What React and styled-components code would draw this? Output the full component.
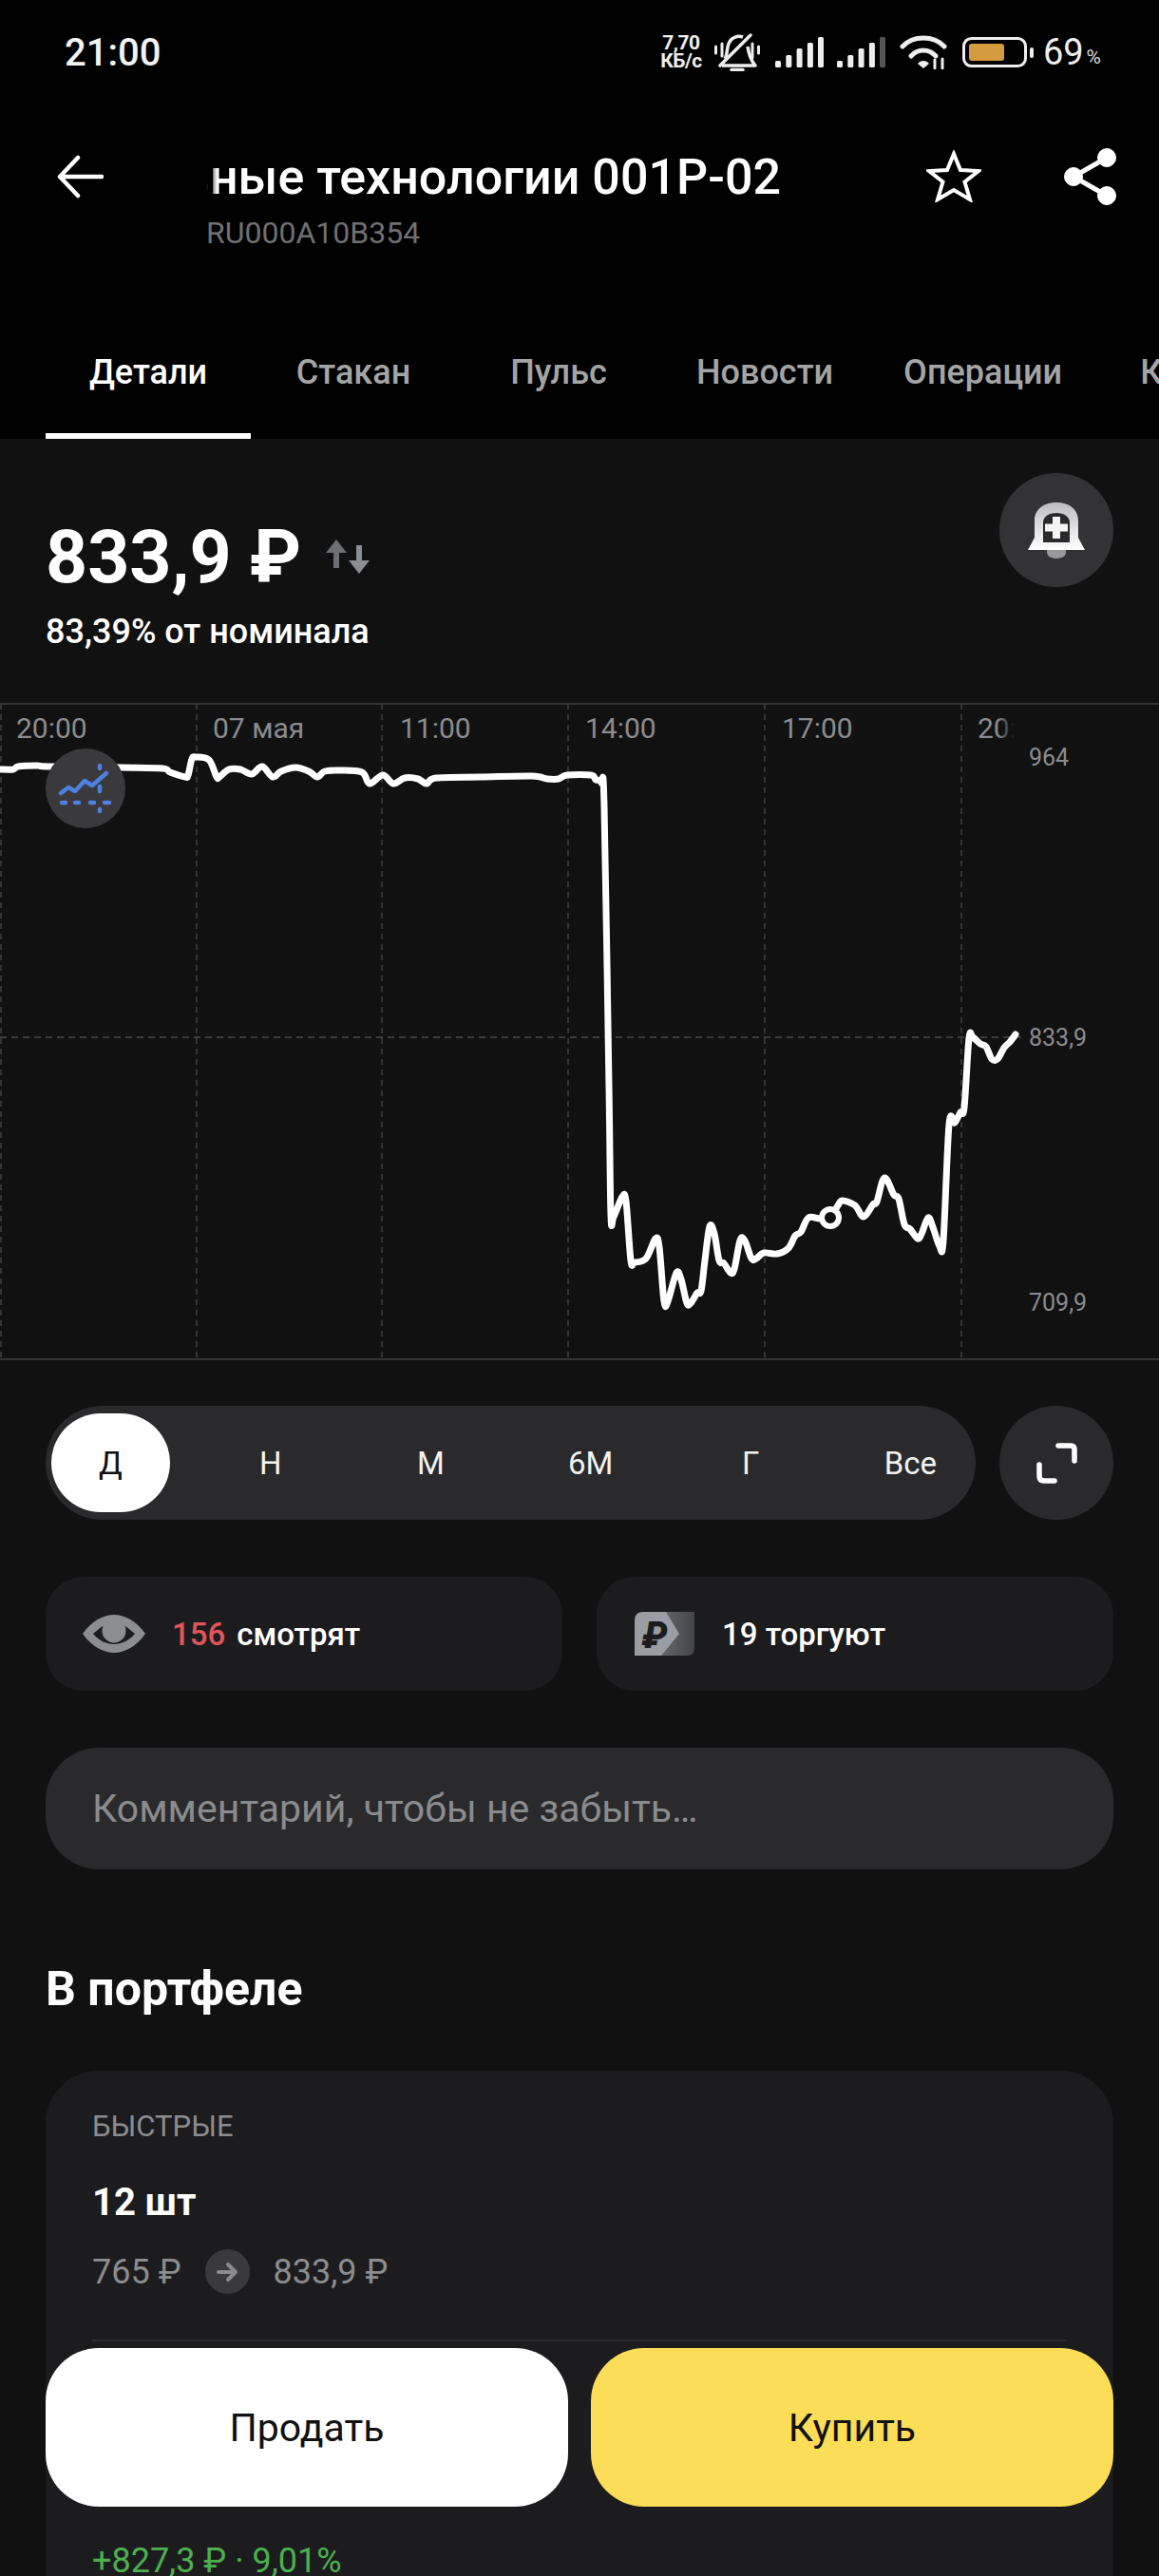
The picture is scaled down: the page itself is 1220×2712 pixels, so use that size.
import React from 'react';
import styled, { createGlobalStyle } from 'styled-components';

const GlobalStyle = createGlobalStyle`
    html, body {
        margin: 0;
        padding: 0;
        background: #111112;
    }

    body {
        font-family: Roboto, "Noto Sans", sans-serif;
    }
`;

const Page = styled.div`
    position: relative;
    width: 1220px;
    height: 2712px;
    overflow: hidden;
    background: #111112;
    color: #fff;
`;

const Header = styled.header`
    height: 462px;
    background: #000;
`;

const StatusBar = styled.div`
    display: flex;
    align-items: center;
    justify-content: space-between;
    height: 110px;
    padding: 0 61px 0 68px;
    box-sizing: border-box;
`;

const Clock = styled.span`
    font-size: 40px;
    font-weight: 500;
    color: #f2f2f2;
`;

const StatusIcons = styled.div`
    display: flex;
    align-items: center;
`;

const NetSpeed = styled.span`
    display: flex;
    flex-direction: column;
    align-items: center;
    width: 46px;
    margin-right: 12px;
    font-size: 21px;
    line-height: 19px;
    font-weight: 700;
    color: #eee;
    letter-spacing: -0.5px;
`;

const StatusSvg = styled.svg`
    display: block;
    margin-right: ${props => props.$gap || 0}px;
`;

const BatteryText = styled.span`
    font-size: 38px;
    line-height: 40px;
    font-weight: 400;
    color: #eee;
    margin-left: 10px;
`;

const BatteryPercent = styled.span`
    font-size: 21px;
    line-height: 20px;
    margin: 9px 0 0 3px;
    color: #ddd;
`;

const TopBar = styled.div`
    display: flex;
    align-items: flex-start;
    height: 230px;
    padding: 46px 45px 0 60px;
    box-sizing: border-box;
`;

const NavIcon = styled.svg`
    display: block;
    flex: none;
    margin-top: ${props => props.$top || 0}px;
    margin-right: ${props => props.$right || 0}px;
`;

const TitleBlock = styled.div`
    width: 605px;
    margin: 1px 153px 0 108px;
    flex: none;
`;

const TitleClip = styled.div`
    display: flex;
    justify-content: flex-end;
    overflow: hidden;
    white-space: nowrap;
    -webkit-mask-image: linear-gradient(90deg, transparent 0, #000 12px);
    mask-image: linear-gradient(90deg, transparent 0, #000 12px);
`;

const Title = styled.h1`
    margin: 0;
    flex: none;
    font-size: 52px;
    line-height: 60px;
    font-weight: 500;
    color: #fff;
`;

const Isin = styled.div`
    margin-top: 8px;
    font-size: 32px;
    line-height: 40px;
    font-weight: 400;
    color: #6f7072;
`;

const Tabs = styled.nav`
    display: flex;
    height: 122px;
    padding-left: 48px;
    overflow: hidden;
`;

const Tab = styled.div`
    flex: none;
    min-width: 216px;
    padding: 32px 37px 0;
    box-sizing: border-box;
    text-align: center;
    font-size: 36px;
    line-height: 40px;
    font-weight: 500;
    color: ${props => (props.$active ? '#fff' : '#a3a4a6')};
    border-bottom: 6px solid ${props => (props.$active ? '#fff' : 'transparent')};

    &:last-child {
        padding-left: 42px;
    }
`;

const PriceSection = styled.section`
    display: flex;
    justify-content: space-between;
    align-items: flex-start;
    height: 278px;
    padding: 0 48px;
    box-sizing: border-box;
`;

const PriceBlock = styled.div`
    padding-top: 82px;
`;

const PriceRow = styled.div`
    display: flex;
    align-items: center;
`;

const PriceValue = styled.div`
    font-size: 77px;
    line-height: 86px;
    font-weight: 700;
    white-space: nowrap;
`;

const SwapIcon = styled.svg`
    display: block;
    margin: 0 0 2px 25px;
`;

const PriceNote = styled.div`
    margin-top: 15px;
    font-size: 36px;
    line-height: 40px;
    font-weight: 500;
`;

const RoundButton = styled.button`
    display: flex;
    align-items: center;
    justify-content: center;
    flex: none;
    width: 120px;
    height: 120px;
    padding: 0;
    border: 0;
    border-radius: 50%;
    background: ${props => props.$bg || '#2a2a2c'};
    margin-top: ${props => props.$top || 0}px;
`;

const ChartBox = styled.section`
    position: relative;
    height: 692px;
`;

const ChartSvg = styled.svg`
    display: block;
`;

const ChartButton = styled.button`
    position: absolute;
    left: 48px;
    top: 48px;
    width: 84px;
    height: 84px;
    padding: 0;
    border: 0;
    border-radius: 50%;
    background: #3a3a3c;
`;

const Content = styled.div`
    padding: 48px 48px 0;
`;

const RangeRow = styled.div`
    display: flex;
    justify-content: space-between;
`;

const RangePicker = styled.div`
    display: flex;
    justify-content: space-between;
    width: 979px;
    height: 120px;
    padding: 8px 6px;
    box-sizing: border-box;
    border-radius: 60px;
    background: #2a2a2c;
`;

const RangeItem = styled.div`
    display: flex;
    align-items: center;
    justify-content: center;
    width: 125px;
    height: 104px;
    border-radius: 52px;
    font-size: 33px;
    font-weight: 400;
    background: ${props => (props.$active ? '#fff' : 'transparent')};
    color: ${props => (props.$active ? '#111' : '#f2f2f2')};
`;

const StatsRow = styled.div`
    display: grid;
    grid-template-columns: 544px 544px;
    justify-content: space-between;
    margin-top: 60px;
`;

const StatCard = styled.div`
    display: flex;
    align-items: center;
    height: 120px;
    padding-left: ${props => props.$pad}px;
    box-sizing: border-box;
    border-radius: 40px;
    background: #1c1c1e;
    font-size: 33px;
    font-weight: 500;
`;

const StatIcon = styled.svg`
    display: block;
    flex: none;
    margin-right: ${props => props.$gap}px;
`;

const Watchers = styled.span`
    color: #e0565b;
    margin-right: 12px;
`;

const CommentField = styled.div`
    display: flex;
    align-items: center;
    height: 128px;
    margin-top: 60px;
    padding-left: 49px;
    border-radius: 56px;
    background: #2a2a2c;
    color: #8a8b8e;
    font-size: 41px;
`;

const SectionTitle = styled.h2`
    margin: 98px 0 0;
    font-size: 50px;
    line-height: 56px;
    font-weight: 700;
`;

const PortfolioCard = styled.div`
    margin-top: 58px;
    height: 700px;
    padding: 41px 49px 0;
    box-sizing: border-box;
    border-radius: 56px;
    background: #1c1c1e;
`;

const CardLabel = styled.div`
    font-size: 31px;
    line-height: 36px;
    color: #8b8c8f;
`;

const Quantity = styled.div`
    margin-top: 40px;
    font-size: 40px;
    line-height: 44px;
    font-weight: 700;
`;

const PriceChange = styled.div`
    display: flex;
    align-items: center;
    height: 47px;
    margin-top: 27px;
    font-size: 36px;
    color: #8b8c8f;
`;

const ArrowBadge = styled.span`
    display: flex;
    align-items: center;
    justify-content: center;
    width: 47px;
    height: 47px;
    margin: 0 25px;
    border-radius: 50%;
    background: #3a3a3c;
`;

const Divider = styled.div`
    height: 2px;
    margin-top: 48px;
    background: #2c2c2e;
`;

const Profit = styled.div`
    margin-top: 211px;
    font-size: 36px;
    line-height: 40px;
    color: #4caf50;
`;

const ActionBar = styled.div`
    position: absolute;
    left: 48px;
    right: 48px;
    bottom: 73px;
    display: grid;
    grid-template-columns: 1fr 1fr;
    gap: 24px;
`;

const ActionButton = styled.button`
    height: 167px;
    border: 0;
    border-radius: 56px;
    font-family: inherit;
    font-size: 41px;
    font-weight: 400;
    color: #111;
    background: ${props => (props.$primary ? '#fcdd57' : '#fff')};
`;

// price points of the day, x and y are in page pixels
const PRICE_POINTS = [
    [0, 810], [14, 810], [19, 807], [39, 806], [52, 807], [128, 808], [171, 809], [179, 813], [195, 818],
    [198, 816], [202, 799], [206, 797], [220, 800], [228, 818], [231, 818], [241, 810], [253, 810], [265, 815],
    [276, 807], [287, 818], [296, 812], [311, 808], [325, 812], [334, 818], [342, 812], [358, 811], [381, 813],
    [389, 825], [403, 816], [414, 825], [426, 819], [440, 820], [449, 825], [459, 819], [506, 818], [560, 817],
    [576, 820], [588, 820], [597, 816], [622, 816], [627, 821], [633, 824], [636, 849], [641, 1143], [643, 1279],
    [646, 1281], [655, 1260], [659, 1265], [664, 1327], [668, 1329], [680, 1325], [690, 1304], [694, 1313],
    [699, 1370], [703, 1370], [712, 1340], [717, 1347], [723, 1372], [727, 1372], [734, 1361], [738, 1359],
    [742, 1327], [747, 1291], [752, 1299], [757, 1327], [762, 1330], [769, 1340], [773, 1336], [779, 1306],
    [784, 1306], [791, 1325], [796, 1325], [804, 1319], [818, 1320], [830, 1314], [837, 1301], [843, 1297],
    [851, 1282], [863, 1283], [874, 1282], [882, 1269], [887, 1264], [900, 1269], [909, 1281], [919, 1268],
    [923, 1265], [931, 1240], [941, 1258], [946, 1262], [952, 1289], [958, 1294], [966, 1304], [970, 1299],
    [977, 1282], [982, 1292], [989, 1312], [993, 1306], [999, 1184], [1005, 1182], [1011, 1171], [1015, 1166],
    [1020, 1093], [1024, 1092], [1032, 1099], [1038, 1102], [1044, 1115], [1050, 1115], [1057, 1103],
    [1063, 1097], [1069, 1089],
];

// cardinal spline through the points, so the peaks stay where they are
const smoothPath = points => {
    let d = `M${points[0][0]} ${points[0][1]}`;
    for (let i = 0; i < points.length - 1; i++) {
        const p0 = points[i - 1] || points[i];
        const p1 = points[i];
        const p2 = points[i + 1];
        const p3 = points[i + 2] || p2;
        const c1x = p1[0] + (p2[0] - p0[0]) / 6;
        const c1y = p1[1] + (p2[1] - p0[1]) / 6;
        const c2x = p2[0] - (p3[0] - p1[0]) / 6;
        const c2y = p2[1] - (p3[1] - p1[1]) / 6;
        d += ` C${c1x} ${c1y} ${c2x} ${c2y} ${p2[0]} ${p2[1]}`;
    }
    return d;
};

const GRID_X = [1, 207, 402, 598, 805, 1012];
const TIME_LABELS = [[17, '20:00'], [224, '07 мая'], [421, '11:00'], [616, '14:00'], [823, '17:00']];
const PRICE_LABELS = [[806, '964'], [1101, '833,9'], [1380, '709,9']];

const PriceChart = () => (
    <ChartSvg width="1220" height="692" viewBox="0 740 1220 692">
        <defs>
            <linearGradient id="labelFade" gradientUnits="userSpaceOnUse" x1="1050" x2="1068" y1="0" y2="0">
                <stop offset="0" stopColor="#8b8c8f" />
                <stop offset="1" stopColor="#8b8c8f" stopOpacity="0" />
            </linearGradient>
        </defs>
        <line x1="0" x2="1220" y1="741" y2="741" stroke="#333436" strokeWidth="2" />
        <line x1="0" x2="1220" y1="1431" y2="1431" stroke="#333436" strokeWidth="2" />
        {GRID_X.map(x => (
            <line key={x} x1={x} x2={x} y1="741" y2="1431" stroke="#333436" strokeWidth="2" strokeDasharray="6 5" />
        ))}
        <line x1="0" x2="1078" y1="1092" y2="1092" stroke="#3a3b3d" strokeWidth="2" strokeDasharray="7 5" />
        {TIME_LABELS.map(([x, label]) => (
            <text key={label} x={x} y="777" fontSize="30" fill="#8b8c8f" fontFamily="Roboto">{label}</text>
        ))}
        <text x="1029" y="777" fontSize="30" fill="url(#labelFade)" fontFamily="Roboto">20:00</text>
        {PRICE_LABELS.map(([y, label]) => (
            <text key={label} x="1083" y={y} fontSize="25" fill="#8b8c8f" fontFamily="Roboto">{label}</text>
        ))}
        <path
            d={smoothPath(PRICE_POINTS)}
            fill="none"
            stroke="#fff"
            strokeWidth="7"
            strokeLinecap="round"
            strokeLinejoin="round"
        />
        <circle cx="874" cy="1282" r="9" fill="#111112" stroke="#fff" strokeWidth="6" />
    </ChartSvg>
);

const SIGNAL_BARS = [[0, 7], [11.3, 13], [22.6, 20], [33.9, 26], [45, 32]];

const Signal = ({ dim, gap }) => (
    <StatusSvg $gap={gap} width="51" height="32" viewBox="0 0 51 32">
        {SIGNAL_BARS.map(([x, h], i) => (
            <rect
                key={x}
                x={x}
                y={32 - h}
                width="6"
                height={h}
                rx="1.5"
                fill={dim && i === 4 ? '#555' : '#eee'}
            />
        ))}
    </StatusSvg>
);

const App = () => (
    <Page>
        <GlobalStyle />
        <Header>
            <StatusBar>
                <Clock>21:00</Clock>
                <StatusIcons>
                    <NetSpeed>
                        <span>7,70</span>
                        <span>КБ/с</span>
                    </NetSpeed>
                    <StatusSvg $gap={16} width="48" height="40" viewBox="0 0 48 40" fill="none" stroke="#eee">
                        <path d="M11 27 C14 22 13 15 15 11 C17 5 24 2 30 4 M35 14 C36 21 38 28 43 34 H8" strokeWidth="3.5" strokeLinejoin="round" />
                        <path d="M18 38.5 H30" strokeWidth="3.5" strokeLinecap="round" />
                        <path d="M6 34 L38 2" strokeWidth="3.5" strokeLinecap="round" />
                        <path d="M1.5 14 V21 M8 11 V24 M40 11 V26 M46.5 14 V21" strokeWidth="3" strokeLinecap="round" />
                    </StatusSvg>
                    <Signal gap={14} />
                    <Signal dim gap={15} />
                    <StatusSvg $gap={16} width="50" height="36" viewBox="0 0 50 36" fill="none" stroke="#eee" strokeWidth="5" strokeLinecap="round">
                        <path d="M3 12 C14 0 36 0 47 12" />
                        <path d="M12 22 C19 14 31 14 38 22" />
                        <path d="M19 30 L25 35 L31 30 C28 26 22 26 19 30 Z" fill="#eee" stroke="none" />
                        <path d="M37 26 V35 M45 25 V35" strokeWidth="3" />
                    </StatusSvg>
                    <StatusSvg width="75" height="32" viewBox="0 0 75 32" fill="none">
                        <rect x="1.5" y="1.5" width="65" height="29" rx="8" stroke="#eee" strokeWidth="3" />
                        <rect x="7" y="7" width="37" height="18" rx="3" fill="#d49b3f" />
                        <rect x="71" y="11" width="4" height="11" rx="2" fill="#eee" />
                    </StatusSvg>
                    <BatteryText>69</BatteryText>
                    <BatteryPercent>%</BatteryPercent>
                </StatusIcons>
            </StatusBar>
            <TopBar>
                <NavIcon $top={7} width="49" height="46" viewBox="0 0 49 46" fill="none" stroke="#fff" strokeWidth="4.5" strokeLinecap="round" strokeLinejoin="round">
                    <path d="M47 23 H3 M22 3 L3 23 L22 43" />
                </NavIcon>
                <TitleBlock>
                    <TitleClip>
                        <Title>вные технологии 001P-02</Title>
                    </TitleClip>
                    <Isin>RU000A10B354</Isin>
                </TitleBlock>
                <NavIcon $top={2} $right={87} width="58" height="55" viewBox="0 0 58 55" fill="none" stroke="#fff" strokeWidth="4" strokeLinejoin="miter">
                    <path d="M29 4 L36 21 L55 22 L40.5 33.5 L46 52 L29 42 L12 52 L17.5 33.5 L3 22 L22 21 Z" />
                </NavIcon>
                <NavIcon width="55" height="60" viewBox="0 0 55 60" fill="#fff" stroke="#fff">
                    <path d="M45 10 L10 30 L45 50" fill="none" strokeWidth="5" />
                    <circle cx="45" cy="10" r="9.5" />
                    <circle cx="10" cy="30" r="9.5" />
                    <circle cx="45" cy="50" r="9.5" />
                </NavIcon>
            </TopBar>
            <Tabs>
                <Tab $active>Детали</Tab>
                <Tab>Стакан</Tab>
                <Tab>Пульс</Tab>
                <Tab>Новости</Tab>
                <Tab>Операции</Tab>
                <Tab>Купоны</Tab>
            </Tabs>
        </Header>

        <PriceSection>
            <PriceBlock>
                <PriceRow>
                    <PriceValue>833,9 ₽</PriceValue>
                    <SwapIcon width="48" height="36" viewBox="0 0 48 36">
                        <path d="M12 0 L23 14 H15 V30 H9 V14 H1 Z" fill="#6c7074" />
                        <path d="M33 6 H39 V22 H47 L36 36 L25 22 H33 Z" fill="#8a8e93" />
                    </SwapIcon>
                </PriceRow>
                <PriceNote>83,39% от номинала</PriceNote>
            </PriceBlock>
            <RoundButton $bg="#333335" $top={36}>
                <svg width="120" height="120" viewBox="0 0 120 120">
                    <defs>
                        <linearGradient id="bellShade" x1="0" x2="0" y1="0" y2="1">
                            <stop offset="0" stopColor="#bdbdbf" />
                            <stop offset="1" stopColor="#fff" />
                        </linearGradient>
                    </defs>
                    <path d="M50 81 H70 V83 C70 88 65 90 60 90 C55 90 50 88 50 83 Z" fill="#99999b" />
                    <path d="M30 81 L37 68 V50 C37 38 47 31 60 31 C73 31 83 38 83 50 V68 L90 81 Z" fill="url(#bellShade)" />
                    <path d="M46 73 V52 C46 46 52 42 60 42 C68 42 74 46 74 52 V73 Z" fill="#2a2a2c" />
                    <path d="M60 46 V69 M48 57.5 H72" stroke="#f4f4f4" strokeWidth="8" />
                </svg>
            </RoundButton>
        </PriceSection>

        <ChartBox>
            <PriceChart />
            <ChartButton>
                <svg width="84" height="84" viewBox="0 0 84 84" fill="none" stroke="#4f7fe0" strokeWidth="4.5" strokeLinecap="round" strokeLinejoin="round">
                    <path d="M16 47 L24 41 L31 45 L41 34 L49 39 L64 26" />
                    <path d="M17 57 H21 M31 57 H35 M47 57 H51 M62 57 H67" />
                    <path d="M57 18 V21 M57 40 V45 M57 64 V66" />
                </svg>
            </ChartButton>
        </ChartBox>

        <Content>
            <RangeRow>
                <RangePicker>
                    <RangeItem $active>Д</RangeItem>
                    <RangeItem>Н</RangeItem>
                    <RangeItem>М</RangeItem>
                    <RangeItem>6М</RangeItem>
                    <RangeItem>Г</RangeItem>
                    <RangeItem>Все</RangeItem>
                </RangePicker>
                <RoundButton>
                    <svg width="120" height="120" viewBox="0 0 120 120" fill="none" stroke="#fff" strokeWidth="5.5" strokeLinecap="round" strokeLinejoin="round">
                        <path d="M62 42 H75 Q79 42 79 46 V58" />
                        <path d="M42 62 V74 Q42 79 47 79 H58" />
                    </svg>
                </RoundButton>
            </RangeRow>

            <StatsRow>
                <StatCard $pad={39}>
                    <StatIcon $gap={28} width="66" height="40" viewBox="0 0 66 40">
                        <path d="M0 20 C10 6 22 0 33 0 C44 0 56 6 66 20 C56 34 44 40 33 40 C22 40 10 34 0 20 Z" fill="#8b8d91" />
                        <path d="M11 20 C17 15 20 12 24 11 H42 C46 12 49 15 55 20 C49 27 41 31 33 31 C25 31 17 27 11 20 Z" fill="#1c1c1e" />
                        <circle cx="33" cy="17" r="12.5" fill="#8b8d91" />
                    </StatIcon>
                    <Watchers>156</Watchers>
                    смотрят
                </StatCard>
                <StatCard $pad={40}>
                    <StatIcon $gap={29} width="63" height="46" viewBox="0 0 63 46">
                        <defs>
                            <linearGradient id="cardBack" x1="0" x2="1" y1="0" y2="0">
                                <stop offset="0" stopColor="#6c6e72" />
                                <stop offset="1" stopColor="#434549" />
                            </linearGradient>
                        </defs>
                        <path d="M20 0 H63 V38 Q63 46 55 46 H20 Z" fill="url(#cardBack)" />
                        <path d="M9 0 H33 L47 23 L28 46 H0 V9 Q0 0 9 0 Z" fill="#9a9da3" />
                        <text x="21" y="38" textAnchor="middle" fontSize="38" fontWeight="900" fontStyle="italic" fontFamily="Roboto" fill="#1c1c1e">₽</text>
                    </StatIcon>
                    19 торгуют
                </StatCard>
            </StatsRow>

            <CommentField>Комментарий, чтобы не забыть…</CommentField>

            <SectionTitle>В портфеле</SectionTitle>

            <PortfolioCard>
                <CardLabel>БЫСТРЫЕ</CardLabel>
                <Quantity>12 шт</Quantity>
                <PriceChange>
                    765 ₽
                    <ArrowBadge>
                        <svg width="24" height="22" viewBox="0 0 24 22" fill="none" stroke="#8b8c8f" strokeWidth="4" strokeLinecap="round" strokeLinejoin="round">
                            <path d="M3 11 H20 M13 3 L21 11 L13 19" />
                        </svg>
                    </ArrowBadge>
                    833,9 ₽
                </PriceChange>
                <Divider />
                <Profit>+827,3 ₽ · 9,01%</Profit>
            </PortfolioCard>
        </Content>

        <ActionBar>
            <ActionButton>Продать</ActionButton>
            <ActionButton $primary>Купить</ActionButton>
        </ActionBar>
    </Page>
);

export default App;
